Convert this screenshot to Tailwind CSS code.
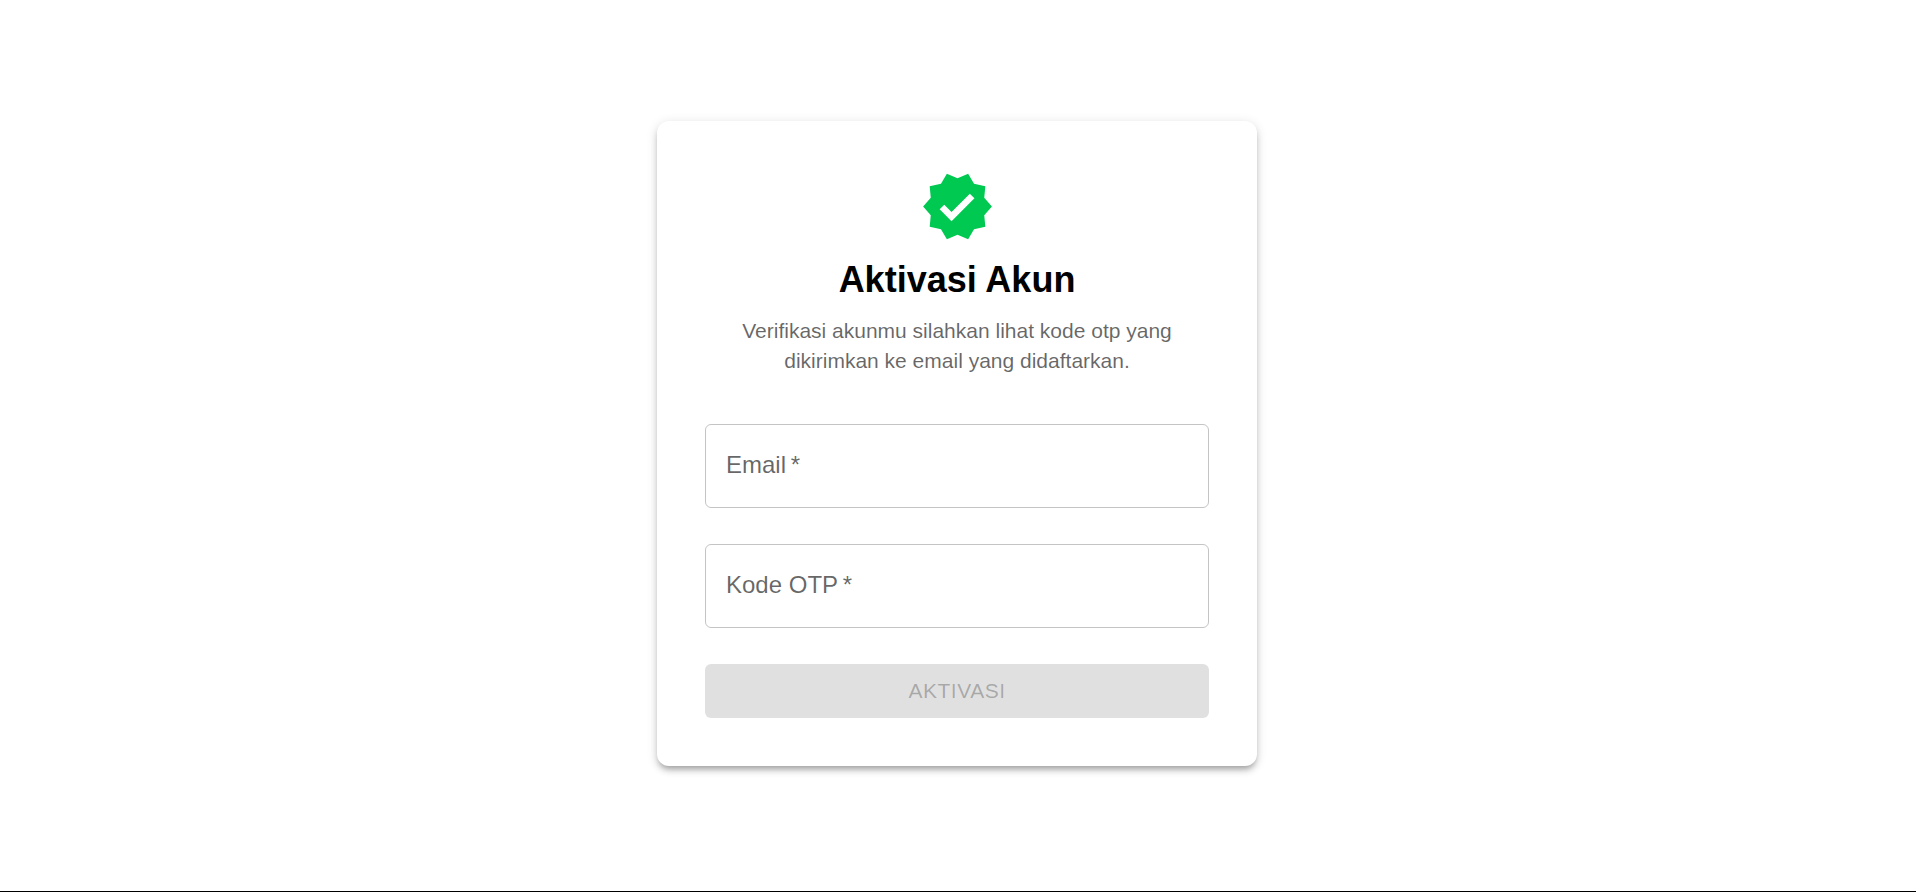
<!DOCTYPE html>
<html lang="id">
<head>
  <meta charset="UTF-8" />
  <meta name="viewport" content="width=device-width, initial-scale=1" />
  <title>Aktivasi Akun</title>
  <script src="https://cdn.jsdelivr.net/npm/@tailwindcss/browser@4"></script>
</head>
<body class="flex min-h-screen flex-col border-b border-black bg-white font-['Liberation_Sans',Arial,sans-serif]">

  <main class="flex flex-1 items-center justify-center pr-0.5 pb-1">
    <div class="w-full max-w-[600px] rounded-xl bg-white p-12 shadow-[0_5px_5px_-3px_rgba(0,0,0,0.2),0_5px_6px_0_rgba(0,0,0,0.14),0_2px_12px_0_rgba(0,0,0,0.12)]">

      <div class="flex flex-col items-center gap-3 text-center">
        <svg class="size-[75px] text-[#00c951]" viewBox="0 0 24 24" fill="currentColor" aria-hidden="true">
          <path d="m23 12-2.44-2.79.34-3.69-3.61-.82-1.89-3.2L12 2.96 8.6 1.5 6.71 4.69 3.1 5.5l.34 3.7L1 12l2.44 2.79-.34 3.7 3.61.82L8.6 22.5l3.4-1.47 3.4 1.46 1.89-3.19 3.61-.82-.34-3.69L23 12zm-12.91 4.72-3.8-3.81 1.48-1.48 2.32 2.33 5.85-5.87 1.48 1.48-7.33 7.35z" />
        </svg>
        <h1 class="text-4xl leading-12 font-bold text-black">Aktivasi Akun</h1>
        <p class="px-6 text-[21px] leading-[30px] text-black/60">Verifikasi akunmu silahkan lihat kode otp yang dikirimkan ke email yang didaftarkan.</p>
      </div>

      <form id="activation-form" class="mt-12 flex flex-col gap-9" novalidate>
        <div class="relative">
          <input
            type="email"
            id="email"
            name="email"
            required
            placeholder=" "
            class="peer block h-21 w-full rounded-md border border-black/23 px-[21px] text-2xl text-black/87 focus:border-blue-600 focus:outline-none"
          />
          <label for="email" class="pointer-events-none absolute top-6 left-[21px] text-2xl leading-[34px] text-black/60 peer-focus:-top-3 peer-focus:bg-white peer-focus:px-1 peer-focus:text-lg peer-focus:leading-6 peer-not-placeholder-shown:-top-3 peer-not-placeholder-shown:bg-white peer-not-placeholder-shown:px-1 peer-not-placeholder-shown:text-lg peer-not-placeholder-shown:leading-6">Email&thinsp;*</label>
        </div>
        <div class="relative">
          <input
            type="text"
            id="otp"
            name="otp"
            required
            placeholder=" "
            class="peer block h-21 w-full rounded-md border border-black/23 px-[21px] text-2xl text-black/87 focus:border-blue-600 focus:outline-none"
          />
          <label for="otp" class="pointer-events-none absolute top-6 left-[21px] text-2xl leading-[34px] text-black/60 peer-focus:-top-3 peer-focus:bg-white peer-focus:px-1 peer-focus:text-lg peer-focus:leading-6 peer-not-placeholder-shown:-top-3 peer-not-placeholder-shown:bg-white peer-not-placeholder-shown:px-1 peer-not-placeholder-shown:text-lg peer-not-placeholder-shown:leading-6">Kode OTP&thinsp;*</label>
        </div>
        <button
          type="submit"
          id="submit-button"
          disabled
          class="h-[54px] w-full rounded-md bg-blue-600 text-[21px] tracking-wide text-white uppercase disabled:bg-black/12 disabled:text-black/26"
        >
          Aktivasi
        </button>
      </form>
    </div>
  </main>

  <script>
    const form = document.getElementById('activation-form');
    const submitButton = document.getElementById('submit-button');

    // Enable the button once both fields are filled in
    form.addEventListener('input', () => {
      submitButton.disabled = !form.email.value.trim() || !form.otp.value.trim();
    });

    form.addEventListener('submit', (e) => {
      e.preventDefault();
    });
  </script>
</body>
</html>
